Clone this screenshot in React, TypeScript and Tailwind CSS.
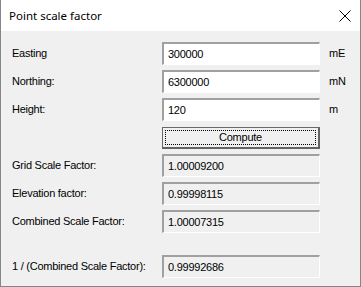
import React from 'react';

// ─── Point scale factor dialog ──────────────────────────────────

const sunken =
    'border-t-2 border-l-2 border-b border-r border-t-[#a0a0a0] border-l-[#a0a0a0] border-b-white border-r-white';

const Field: React.FC<{ label: string; value: string; unit?: string }> = ({ label, value, unit }) => (
    <div className="flex items-center h-[23px]">
        <div className="w-[161px] pl-[11px] whitespace-nowrap">{label}</div>
        <div className={`w-[158px] h-[23px] bg-white flex items-center px-[4px] ${sunken}`}>{value}</div>
        {unit && <div className="pl-[9px]">{unit}</div>}
    </div>
);

const Readout: React.FC<{ label: string; value: string }> = ({ label, value }) => (
    <div className="flex items-center h-[23px]">
        <div className="w-[161px] pl-[11px] whitespace-nowrap">{label}</div>
        <div className={`w-[158px] h-[23px] bg-[#f0f0f0] flex items-center px-[4px] ${sunken}`}>{value}</div>
    </div>
);

export default function App() {
    return (
        <div
            className="w-[361px] h-[287px] bg-[#f0f0f0] border-x border-b border-[#868686] flex flex-col text-[11px] tracking-[-0.25px] text-black"
            style={{ fontFamily: '"Liberation Sans", Arial, sans-serif' }}
        >
            {/* Title bar */}
            <div className="h-[31px] bg-white flex items-center justify-between pl-2 pr-[9px] shrink-0">
                <span className="text-[11.5px] tracking-normal" style={{ fontFamily: '"Noto Sans", "Open Sans", sans-serif' }}>
                    Point scale factor
                </span>
                <svg width="12" height="12" viewBox="0 0 12 12" className="text-black">
                    <path d="M0.5 0.5 L11.5 11.5 M11.5 0.5 L0.5 11.5" stroke="currentColor" strokeWidth="1" />
                </svg>
            </div>

            <div className="flex flex-col pt-[11px] gap-[5px]">
                <Field label="Easting" value="300000" unit="mE" />
                <Field label="Northing:" value="6300000" unit="mN" />
                <Field label="Height:" value="120" unit="m" />

                <div className="flex h-[22px] mt-[1px]">
                    <div className="w-[161px]" />
                    <button className="w-[158px] h-[22px] border border-[#696969] border-r-2 border-b-2 border-r-[#646464] border-b-[#646464] bg-[#f0f0f0] p-[2px]">
                        <div className="w-full h-full border border-dotted border-black flex items-center justify-center">
                            Compute
                        </div>
                    </button>
                </div>

                <Readout label="Grid Scale Factor:" value="1.00009200" />
                <Readout label="Elevation factor:" value="0.99998115" />
                <Readout label="Combined Scale Factor:" value="1.00007315" />
                <div className="h-[12px]" />
                <Readout label="1 / (Combined Scale Factor):" value="0.99992686" />
            </div>
        </div>
    );
}
